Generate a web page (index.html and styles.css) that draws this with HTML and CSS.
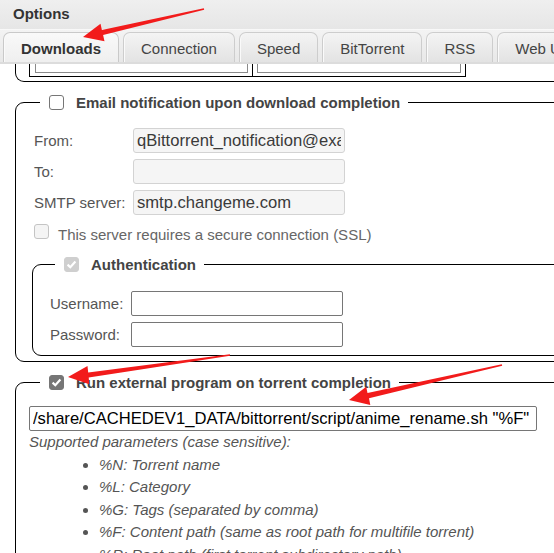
FILE: index.html
```html
<!DOCTYPE html>
<html>
<head>
<meta charset="utf-8">
<link rel="stylesheet" href="styles.css">
</head>
<body>
<div class="window">
  <div class="titlebar">Options</div>
  <div class="tabs">
    <div class="tab active">Downloads</div>
    <div class="tab">Connection</div>
    <div class="tab">Speed</div>
    <div class="tab">BitTorrent</div>
    <div class="tab">RSS</div>
    <div class="tab">Web UI</div>
  </div>
  <div class="content">
    <div class="prev-fieldset">
      <div class="ptable">
        <div class="pcell first"><div class="pinput"></div></div>
        <div class="pcell"><div class="pinput"></div></div>
      </div>
    </div>

    <fieldset class="fs email">
      <legend class="lg lg-email"><span class="cb"></span><span class="lg-text">Email notification upon download completion</span></legend>
      <div class="form-grid grid-email">
        <label class="lbl">From:</label>
        <input class="field disabled" type="text" value="qBittorrent_notification@example.com" disabled>
        <label class="lbl">To:</label>
        <input class="field disabled" type="text" value="" disabled>
        <label class="lbl">SMTP server:</label>
        <input class="field disabled" type="text" value="smtp.changeme.com" disabled>
      </div>
      <div class="check-row"><span class="cb cb-disabled"></span><span class="muted">This server requires a secure connection (SSL)</span></div>

      <fieldset class="fs auth">
        <legend class="lg lg-auth"><span class="cb cb-disabled-checked"><svg viewBox="0 0 15 15" width="15" height="15"><path d="M3.6 7.6 L6.3 10.2 L11.4 4.6" fill="none" stroke="#fff" stroke-width="2.2"/></svg></span><span class="lg-text">Authentication</span></legend>
        <div class="form-grid grid-auth">
          <label class="lbl">Username:</label>
          <input class="field" type="text" value="">
          <label class="lbl">Password:</label>
          <input class="field" type="password" value="">
        </div>
      </fieldset>
    </fieldset>

    <fieldset class="fs run">
      <legend class="lg lg-run"><span class="cb cb-checked"><svg viewBox="0 0 15 15" width="15" height="15"><path d="M3.6 7.6 L6.3 10.2 L11.4 4.6" fill="none" stroke="#fff" stroke-width="2.2"/></svg></span><span class="lg-text">Run external program on torrent completion</span></legend>
      <input class="field wide" type="text" value="/share/CACHEDEV1_DATA/bittorrent/script/anime_rename.sh &quot;%F&quot;">
      <div class="params">Supported parameters (case sensitive):</div>
      <ul class="param-list">
        <li>%N: Torrent name</li>
        <li>%L: Category</li>
        <li>%G: Tags (separated by comma)</li>
        <li>%F: Content path (same as root path for multifile torrent)</li>
        <li>%R: Root path (first torrent subdirectory path)</li>
      </ul>
    </fieldset>
  </div>

  <svg class="annot" width="554" height="553" viewBox="0 0 554 553">
    <polygon fill="#f21b1b" points="203.8,8.2 101.9,30.1 100.5,23.7 83,37 104.5,41.3 103.1,34.9 204.2,9.8"/>
    <polygon fill="#f21b1b" points="229.9,354.2 88.2,372.6 87.5,366 68,377 89.3,384.3 88.7,377.6 230.1,355.8"/>
    <polygon fill="#f21b1b" points="501.8,364.2 367.5,393.0 366.2,386.7 349,400 370.3,404.9 369,398.3 502.2,365.8"/>
  </svg>
</div>
</body>
</html>
```

FILE: styles.css
```css
* { box-sizing: border-box; }

html, body {
  margin: 0;
  padding: 0;
  background: #fff;
}

body {
  width: 554px;
  height: 553px;
  overflow: hidden;
  font-family: "Liberation Sans", Arial, sans-serif;
  font-size: 15px;
  color: #555;
}

.window {
  position: relative;
  width: 554px;
  height: 553px;
  overflow: hidden;
}

.titlebar {
  height: 29px;
  padding-left: 13px;
  line-height: 27px;
  font-weight: bold;
  font-size: 15px;
  color: #333;
  background: linear-gradient(#efefef, #e6e6e6);
}

.tabs {
  display: flex;
  align-items: flex-end;
  gap: 4px;
  height: 35px;
  padding: 3px 0 0 3px;
  background: linear-gradient(#f3f3f3, #e8e8e8);
  border-top: 1px solid #f8f8f8;
  border-bottom: 2px solid #dcdcdc;
  white-space: nowrap;
}

.tab {
  flex: none;
  height: 30px;
  padding: 2px 17px 0;
  line-height: 28px;
  font-size: 15px;
  color: #444;
  background: linear-gradient(#f4f4f4, #e3e3e3);
  border: 1px solid #cdcdcd;
  border-bottom: none;
  border-radius: 7px 7px 0 0;
  box-shadow: inset 1px 0 0 #fafafa;
}

.tab.active {
  font-weight: bold;
  color: #333;
  background: linear-gradient(#f9f9f9, #efefef);
  border-color: #c9c9c9;
}

.content {
  padding-left: 15px;
  background: #fff;
}

.prev-fieldset {
  width: 620px;
  height: 18px;
  padding: 0 0 4px 13px;
  border: 1px solid #000;
  border-top: none;
  border-radius: 0 0 9px 9px;
}

.ptable {
  display: flex;
  width: 437px;
  height: 13px;
  border: 1px solid #000;
  border-top: none;
}

.pcell {
  flex: 1;
  padding: 0 4px 3px 4px;
}

.pcell.first {
  flex: none;
  width: 223px;
  padding-left: 5px;
  border-right: 1px solid #000;
}

.pinput {
  height: 100%;
  border: 1px solid #8a8a8a;
  border-top: none;
}

.fs {
  margin: 0;
  min-width: 0;
  border: 1px solid #000;
  border-radius: 9px;
}

.email {
  width: 620px;
  margin-top: 10px;
  padding: 16px 0 5px 16px;
}

.auth {
  width: 620px;
  margin-top: 9px;
  padding: 17px 0 8px 17px;
}

.run {
  width: 620px;
  margin-top: 10px;
  padding: 14px 0 20px 13px;
}

.lg {
  display: flex;
  align-items: center;
  height: 20px;
  padding: 0 8px 0 5px;
  font-weight: bold;
  font-size: 15px;
  color: #444;
}

.lg-email { margin-left: 8px; }
.lg-auth { margin-left: 5px; }
.lg-run { margin-left: 11px; }

.cb {
  flex: none;
  display: inline-block;
  width: 15px;
  height: 15px;
  margin: 0 12px 0 4px;
  border: 1px solid #767676;
  border-radius: 3px;
  background: #fff;
  position: relative;
}

.cb svg {
  position: absolute;
  left: -1px;
  top: -1px;
}

.cb-disabled {
  border-color: #c4c4c4;
  background: #f4f4f4;
}

.cb-disabled-checked {
  border-color: #cfcfcf;
  background: #cfcfcf;
}

.cb-checked {
  border-color: #767676;
  background: #767676;
}

.form-grid {
  display: grid;
  grid-auto-rows: 25px;
  row-gap: 6px;
  align-items: center;
}

.grid-email { grid-template-columns: 101px 212px; }
.grid-auth { grid-template-columns: 81px 212px; }

.lbl {
  padding-left: 2px;
  font-size: 15px;
  color: #555;
}

.grid-auth .lbl { padding-left: 0; }

.field {
  width: 212px;
  height: 25px;
  margin: 0;
  padding: 0 3px;
  font-family: "Liberation Sans", Arial, sans-serif;
  font-size: 16.6px;
  color: #000;
  background: #fff;
  border: 1px solid #767676;
  border-radius: 2px;
  outline: none;
}

.field.disabled {
  color: #3a3a3a;
  background: #f5f5f5;
  border-color: #d3d3d3;
  border-radius: 3px;
}

.field.wide {
  width: 508px;
  display: block;
}

.check-row {
  display: flex;
  align-items: flex-start;
  height: 20px;
  margin-top: 10px;
  line-height: 20px;
}

.check-row .cb {
  margin: -1px 9px 0 2px;
}

.muted { color: #666; }

.params {
  line-height: 22.5px;
  font-style: italic;
  color: #555;
}

.param-list {
  margin: 0;
  padding-left: 70px;
  line-height: 22.5px;
  font-style: italic;
  color: #555;
}

.annot {
  position: absolute;
  left: 0;
  top: 0;
  pointer-events: none;
}
```
